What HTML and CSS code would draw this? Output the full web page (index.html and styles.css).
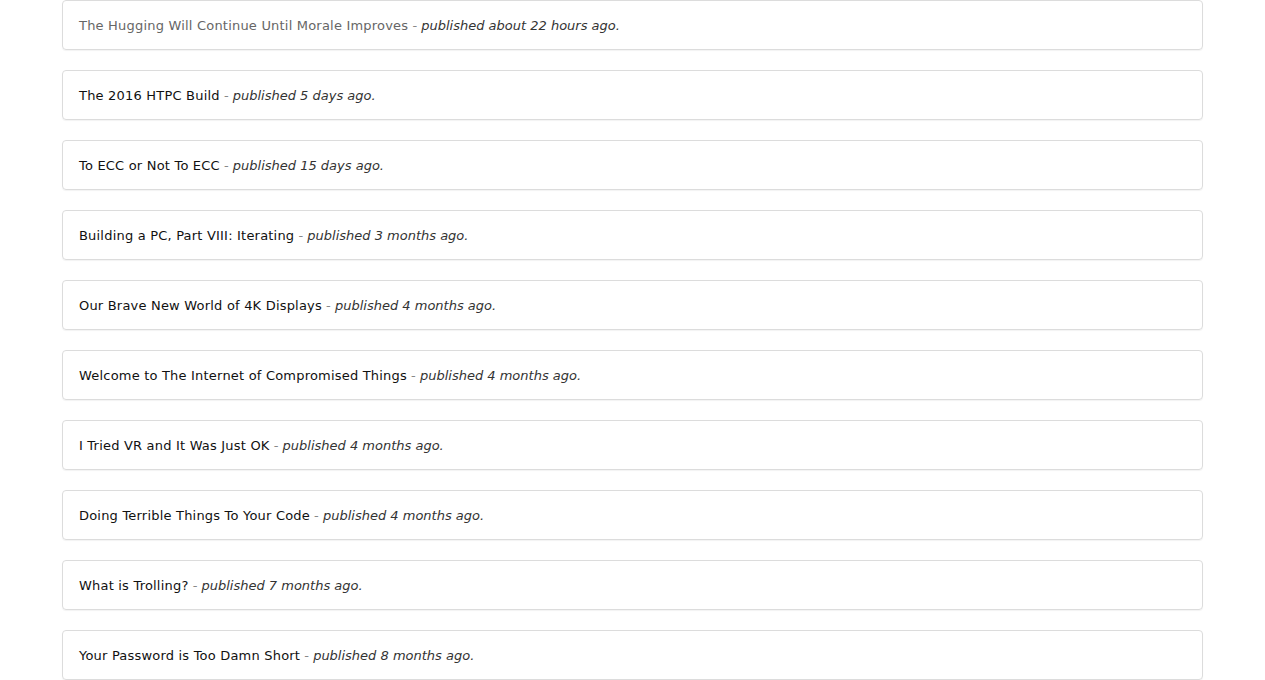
FILE: index.html
```html
<!DOCTYPE html>
<html>
<head>
<meta charset="utf-8">
<link rel="stylesheet" href="styles.css">
</head>
<body>
<ul class="posts">
  <li class="post"><a class="title visited" href="#">The Hugging Will Continue Until Morale Improves</a> <span class="dash">-</span> <em class="date">published about 22 hours ago.</em></li>
  <li class="post"><a class="title" href="#">The 2016 HTPC Build</a> <span class="dash">-</span> <em class="date">published 5 days ago.</em></li>
  <li class="post"><a class="title" href="#">To ECC or Not To ECC</a> <span class="dash">-</span> <em class="date">published 15 days ago.</em></li>
  <li class="post"><a class="title" href="#">Building a PC, Part VIII: Iterating</a> <span class="dash">-</span> <em class="date">published 3 months ago.</em></li>
  <li class="post"><a class="title" href="#">Our Brave New World of 4K Displays</a> <span class="dash">-</span> <em class="date">published 4 months ago.</em></li>
  <li class="post"><a class="title" href="#">Welcome to The Internet of Compromised Things</a> <span class="dash">-</span> <em class="date">published 4 months ago.</em></li>
  <li class="post"><a class="title" href="#">I Tried VR and It Was Just OK</a> <span class="dash">-</span> <em class="date">published 4 months ago.</em></li>
  <li class="post"><a class="title" href="#">Doing Terrible Things To Your Code</a> <span class="dash">-</span> <em class="date">published 4 months ago.</em></li>
  <li class="post"><a class="title" href="#">What is Trolling?</a> <span class="dash">-</span> <em class="date">published 7 months ago.</em></li>
  <li class="post"><a class="title" href="#">Your Password is Too Damn Short</a> <span class="dash">-</span> <em class="date">published 8 months ago.</em></li>
</ul>
</body>
</html>
```

FILE: styles.css
```css
html, body {
  margin: 0;
  padding: 0;
  background: #fff;
}
body {
  font-family: "DejaVu Sans", Verdana, sans-serif;
  font-size: 13px;
  color: #222;
  overflow: hidden;
}
.posts {
  list-style: none;
  margin: 0 auto;
  padding: 0;
  width: 1141px;
  display: flex;
  flex-direction: column;
  gap: 20px;
}
.post {
  box-sizing: border-box;
  height: 50px;
  line-height: 47px;
  padding: 1px 16px 0;
  border: 1px solid #dcdcdc;
  border-radius: 4px;
  box-shadow: 0 1px 1px rgba(0,0,0,0.05);
  white-space: nowrap;
}
.title {
  color: #111;
  text-decoration: none;
  letter-spacing: 0.2px;
}
.title.visited {
  color: #666;
}
.dash {
  color: #888;
}
.date {
  color: #333;
  font-style: italic;
}
```
